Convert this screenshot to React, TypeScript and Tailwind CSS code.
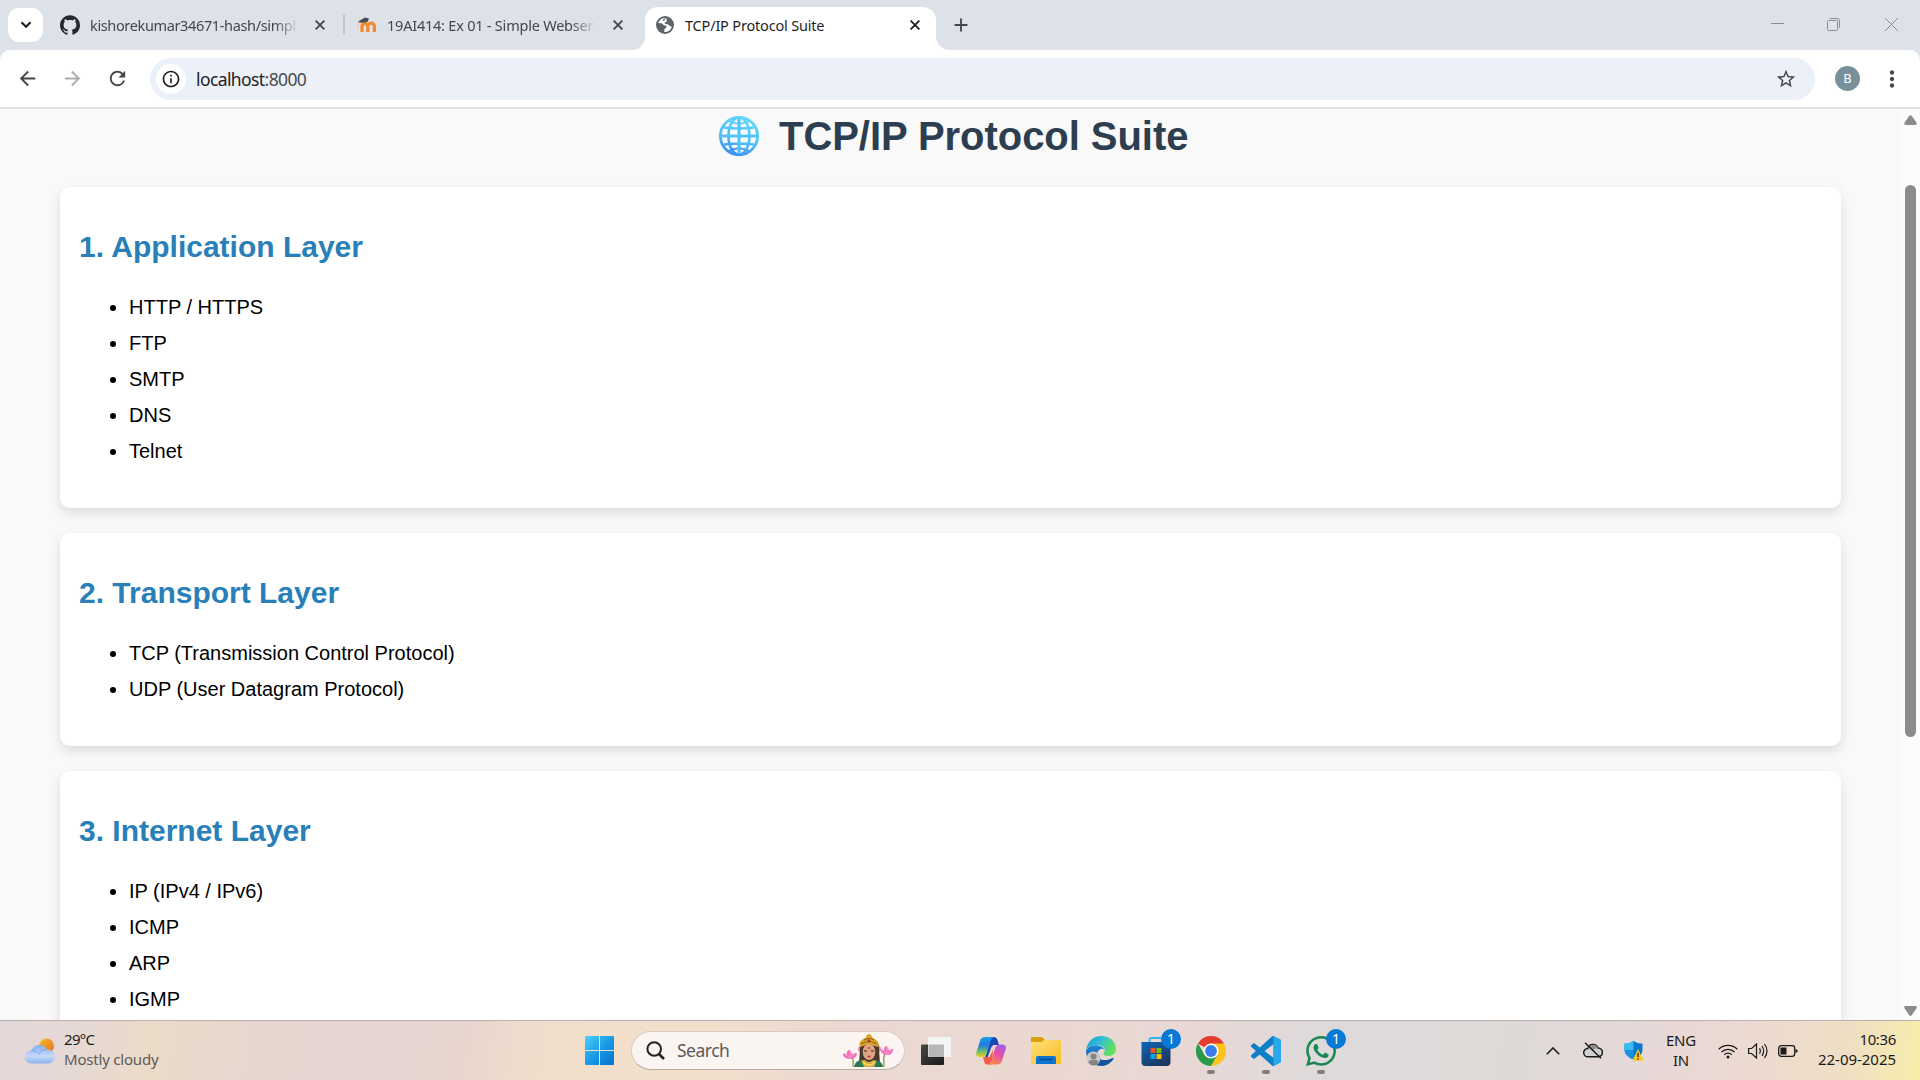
import React from "react";
import { SiGithub, SiWhatsapp } from "react-icons/si";
import { MdArrowBack, MdArrowForward, MdRefresh, MdStarBorder, MdMoreVert, MdInfoOutline, MdAdd } from "react-icons/md";

const ui = "font-['Noto_Sans','Open_Sans',sans-serif]";

function Cross({ className = "" }: { className?: string }) {
  return (
    <svg viewBox="0 0 10 10" className={`size-[10px] shrink-0 ${className}`} stroke="currentColor" strokeWidth="1.9" fill="none">
      <path d="M.6.6l8.8 8.8M9.4.6L.6 9.4" />
    </svg>
  );
}

function MoodleIcon() {
  return (
    <svg viewBox="0 0 20 16" className="h-[16px] w-[20px] shrink-0">
      <path d="M5 15V9.500a2.900 2.900 0 0 1 5.800 0V15M10.800 15V9.500a3.200 3.200 0 0 1 6.600 0V15" fill="none" stroke="#f5892d" strokeWidth="3.300" />
      <path d="M1 4.500L8 .5l4 1-1.500 3.500-5 .8-3-.3z" fill="#4b4b50" />
      <path d="M1.500 4.500L1 11" stroke="#e8b48c" strokeWidth=".8" />
    </svg>
  );
}

function SiteGlobe() {
  return (
    <svg viewBox="0 0 18 18" className="size-[18px] shrink-0">
      <circle cx="9" cy="9" r="9" fill="#5f6368" />
      <path d="M9.500 1.900C6 1.700 3.200 4 2.300 7l3.200.3c1.200.1 1.300 1.600 2.500 1.900 1.500.3 2.600.3 2.500 1.800-.1 1.300-1.700 1-2 2.200l-.3 2.700c3.600.6 6.900-1.900 7.700-5.400-1.300.2-2.300-.3-2.800-1.200-.6-1.200-2.600-.9-3.800-1.300-1-.5-.6-1.900.5-2 1.300-.1.700-1.400 1.300-2z" fill="#fff" />
      <path d="M9 2.300c-1.400.5-2.500 1.700-1.900 2.400.7.700 1.800-.4 2.400-2.400zM2 8.500l2.300 1.300c.8.500.6 1.400 1.300 2.200.8.900.6 2.200.4 3.200A7 7 0 0 1 2 8.500z" fill="#5f6368" />
    </svg>
  );
}

function TabStrip() {
  return (
    <div className="flex h-[50px] w-full bg-[#dde1e8] text-[#45474a]">
      <div className="mt-2 ml-2 flex h-[34px] w-[35px] items-center justify-center rounded-[11px] bg-white text-[#1f1f1f]">
        <svg viewBox="0 0 12 8" className="h-[8px] w-[12px]" fill="none" stroke="currentColor" strokeWidth="2.200">
          <path d="M1.500 1.200L6 5.700l4.500-4.500" />
        </svg>
      </div>
      <div className="ml-[17px] flex h-[50px] w-[283px] items-center">
        <SiGithub className="size-5 shrink-0 text-[#24292f]" />
        <span className="mt-px ml-[10px] w-[209px] text-[14.500px] tracking-[-0.360px] whitespace-nowrap [mask-image:linear-gradient(to_right,black_88%,transparent_100%)]">
          kishorekumar34671-hash/simpl
        </span>
        <Cross className="ml-4" />
      </div>
      <div className="mt-[14px] h-[21px] w-[2px] rounded bg-[#c5c6ca]" />
      <div className="ml-[12px] flex h-[50px] w-[275px] items-center">
        <MoodleIcon />
        <span className="mt-px ml-[10px] w-[209px] text-[14.500px] tracking-[-0.220px] whitespace-nowrap [mask-image:linear-gradient(to_right,black_88%,transparent_100%)]">
          19AI414: Ex 01 - Simple Webser
        </span>
        <Cross className="ml-[17px]" />
      </div>
      <div className="h-[50px] w-[13px] bg-white">
        <div className="h-full w-full rounded-br-[14px] bg-[#dde1e8]" />
      </div>
      <div className="mt-[7px] flex h-[43px] w-[291px] items-center rounded-t-[13px] bg-white pb-[7px] text-[#1f1f1f]">
        <div className="ml-[11px] flex w-full items-center">
          <SiteGlobe />
          <span className="mt-px ml-[11px] w-[225px] text-[14.500px] tracking-[-0.180px] whitespace-nowrap">TCP/IP Protocol Suite</span>
          <Cross />
        </div>
      </div>
      <div className="h-[50px] w-[14px] bg-white">
        <div className="h-full w-full rounded-bl-[14px] bg-[#dde1e8]" />
      </div>
      <MdAdd className="mt-[14px] size-[22px]" />
      <div className="mr-[22px] ml-auto flex h-[48px] items-center text-[#8b8d92]">
        <div className="mb-[1px] h-px w-[13px] bg-current" />
        <svg viewBox="0 0 13 13" className="ml-[43px] size-[13px]" fill="none" stroke="currentColor">
          <rect x=".5" y="2.500" width="10" height="10" rx="1" />
          <path d="M3 .5h7.500a2 2 0 0 1 2 2V10" />
        </svg>
        <svg viewBox="0 0 13 13" className="ml-[45px] size-[13px]" fill="none" stroke="currentColor">
          <path d="M0 0l13 13M13 0L0 13" />
        </svg>
      </div>
    </div>
  );
}

function Toolbar() {
  return (
    <div className="h-[59px] w-full bg-[#dde1e8]">
      <div className="flex h-full items-start rounded-t-[10px] border-b-2 border-[#e1e1e1] bg-white pt-2 text-[#45474a]">
        <div className="ml-4 flex h-[42px] w-[134px] items-center gap-[22px] pb-px">
          <MdArrowBack className="size-[23px]" />
          <MdArrowForward className="size-[23px] text-[#adadad]" />
          <MdRefresh className="size-[23px]" />
        </div>
        <div className="flex h-[42px] w-[1665px] items-center rounded-full bg-[#ecf0f9] pl-[6px] text-[#1f1f1f]">
          <div className="flex size-[30px] items-center justify-center rounded-full bg-white">
            <MdInfoOutline className="size-[20px]" />
          </div>
          <span className="mt-[2px] ml-[10px] text-[17.500px] leading-none tracking-[-0.600px]">
            localhost<span className="text-[#4a4c50]">:8000</span>
          </span>
          <MdStarBorder className="mr-[18px] ml-auto size-[22px] text-[#45474a]" />
        </div>
        <div className="mt-2 ml-[20px] flex size-[25px] items-center justify-center rounded-full bg-[#78909c] font-[Roboto,sans-serif] text-[13px] text-white">B</div>
        <MdMoreVert className="mt-[8px] ml-[19px] size-[26px]" />
      </div>
    </div>
  );
}

function GlobeEmoji() {
  return (
    <svg viewBox="0 0 40 40" className="size-[40px]">
      <defs>
        <linearGradient id="globe" x1=".6" y1="0" x2=".3" y2="1" gradientUnits="objectBoundingBox">
          <stop offset="0" stopColor="#5fd6fb" />
          <stop offset=".6" stopColor="#4cbcfa" />
          <stop offset="1" stopColor="#3f8df0" />
        </linearGradient>
      </defs>
      <circle cx="20" cy="20" r="18.500" fill="#f6fbff" />
      <g fill="none" stroke="url(#globe)" strokeWidth="2.600">
        <circle cx="20" cy="20" r="18.600" strokeWidth="2.800" />
        <ellipse cx="20" cy="20" rx="10.500" ry="18.500" />
        <path d="M5 11.500q15 2 30 0M5 28.500q15-2 30 0M2 19.990L38 20.010M19.990 2L20.010 38" />
        <path d="M10 5q10 5.500 20 0M10 35q10-5.500 20 0" strokeWidth="1.800" />
      </g>
      <path d="M2 20h36M20 2v36" stroke="#4fc4fb" strokeWidth="2.600" />
    </svg>
  );
}

const layers = [
  { title: "1. Application Layer", items: ["HTTP / HTTPS", "FTP", "SMTP", "DNS", "Telnet"] },
  { title: "2. Transport Layer", items: ["TCP (Transmission Control Protocol)", "UDP (User Datagram Protocol)"] },
  { title: "3. Internet Layer", items: ["IP (IPv4 / IPv6)", "ICMP", "ARP", "IGMP"] },
];

function Page() {
  return (
    <div className="flex h-[911px] w-full overflow-hidden bg-[#f9f9f9] font-['Liberation_Sans',Arial,sans-serif] text-black">
      <main className="h-full w-[1901px] pr-[60px] pl-[60px]">
        <h1 className="mt-[4px] flex h-[46px] items-center pl-[659px] text-[40px] leading-[46px] font-bold whitespace-nowrap text-[#2c3e50]">
          <GlobeEmoji />
          <span className="ml-[20px] tracking-[-0.050px]">TCP/IP Protocol Suite</span>
        </h1>
        <div className="mt-[28px] flex flex-col gap-[25px]">
          {layers.map((l) => (
            <section key={l.title} className="rounded-[10px] bg-white px-5 py-[20px] shadow-[0_5px_12px_rgba(0,0,0,0.12)]">
              <h2 className="mt-[24px] mb-[27px] -ml-px text-[30px] leading-[31px] font-bold text-[#2980b9]">{l.title}</h2>
              <ul className="mb-[19px] list-disc pl-[49px] text-[20px] leading-[36px]">
                {l.items.map((i) => (
                  <li key={i}>{i}</li>
                ))}
              </ul>
            </section>
          ))}
        </div>
      </main>
      <div className="flex h-full w-[19px] flex-col items-center bg-[#fcfcfc]">
        <svg viewBox="0 0 13 10" className="mt-[6px] h-[10px] w-[13px] shrink-0" fill="#8b8b8b">
          <path d="M5.300.8q1.200-1.300 2.400 0l4.800 7q.8 2-1 2.200h-10q-1.800-.2-1-2.200z" />
        </svg>
        <div className="mt-[60px] h-[552px] w-[11px] shrink-0 rounded-full bg-[#8b8b8b]" />
        <svg viewBox="0 0 13 10" className="mt-auto mb-[4px] h-[10px] w-[13px] shrink-0 rotate-180" fill="#8b8b8b">
          <path d="M5.300.8q1.200-1.300 2.400 0l4.800 7q.8 2-1 2.200h-10q-1.800-.2-1-2.200z" />
        </svg>
      </div>
    </div>
  );
}

function WeatherIcon() {
  return (
    <svg viewBox="0 0 30 26" className="h-[26px] w-[30px] shrink-0">
      <defs>
        <linearGradient id="sun" x1="0" y1="0" x2="1" y2="1">
          <stop offset="0" stopColor="#f2bf2e" />
          <stop offset="1" stopColor="#ee6c1b" />
        </linearGradient>
        <linearGradient id="cloud" x1="0" y1="0" x2="0" y2="1">
          <stop offset="0" stopColor="#89aef0" />
          <stop offset=".6" stopColor="#c6daf9" />
          <stop offset="1" stopColor="#8fb2f0" />
        </linearGradient>
      </defs>
      <circle cx="21.500" cy="8" r="7.500" fill="url(#sun)" />
      <path d="M6.500 25.500a6.500 6.500 0 0 1-.5-13A9 9 0 0 1 22 11.500a7 7 0 1 1 1.500 14z" fill="url(#cloud)" />
      <path d="M14 16.500a7.500 7.500 0 0 1 8-4.800M6 12.500a7 7 0 0 1 6.500 2.300" fill="none" stroke="#7fa5ea" strokeWidth="1" />
    </svg>
  );
}

function WindowsIcon() {
  return (
    <svg viewBox="0 0 29 29" className="size-[29px]">
      <defs>
        <linearGradient id="win" x1="0" y1="0" x2="29" y2="29" gradientUnits="userSpaceOnUse">
          <stop offset="0" stopColor="#4fd0fb" />
          <stop offset=".5" stopColor="#1a9ae6" />
          <stop offset="1" stopColor="#0670cf" />
        </linearGradient>
      </defs>
      <path fill="url(#win)" d="M1 0h13v14H0V1a1 1 0 0 1 1-1zM15 0h13a1 1 0 0 1 1 1v13H15zM0 15h14v14H1a1 1 0 0 1-1-1zM15 15h14v13a1 1 0 0 1-1 1H15z" />
    </svg>
  );
}

function FestivalArt() {
  const petals = "M0 6Q-7 5-7-1Q-4-1-3 1Q-4-3-1-5Q2-3 2 1Q4-2 7-1Q6 6 0 6";
  return (
    <svg viewBox="0 0 52 34" className="h-[34px] w-[52px]">
      <path d="M10 21q2 6 1 12M43 17q-2 8-1 16" stroke="#73963f" strokeWidth="1.200" fill="none" />
      <g fill="#f26bbb">
        <path d={petals} transform="translate(8 20) scale(1 .85)" />
        <path d={petals} transform="translate(45 16) scale(.9 .85)" />
        <circle cx="19" cy="15" r="3" fill="#f07eb5" />
        <circle cx="36" cy="15" r="3" fill="#f07eb5" />
      </g>
      <path d="M3 20l5 4 5-4M8 17v7M40 16l5 4 5-4M45 13v7" stroke="#fbb4de" strokeWidth=".8" fill="none" />
      <path d="M18 15q0-10 9-11 10 1 10 11l1 15H17z" fill="#49372d" />
      <path d="M18 13q-2-5 3-8 3-1 4-4 2-2 4 0 1 3 4 4 5 3 3 8-9-4-18 0z" fill="#d9a62c" />
      <path d="M19 10q8-5 16 0M22 6q5-3 10 0" stroke="#8b5b18" strokeWidth="1.100" fill="none" />
      <circle cx="27" cy="7" r="1.400" fill="#b52c35" />
      <ellipse cx="27" cy="18" rx="6.300" ry="8" fill="#dfa582" />
      <path d="M22 17h3M29 17h3" stroke="#392520" strokeWidth="1.200" />
      <path d="M27 13v2M25.500 22.500h3" stroke="#b8313d" strokeWidth="1.300" />
      <path d="M12 33q2-7 11-7 4 4 8 0 9 1 11 7z" fill="#d9ac35" />
      <path d="M12 33q1-6 7-7l3 7zM32 33l3-7q5 2 6 7z" fill="#287655" />
      <path d="M21 28q6 6 12 0" stroke="#f5e07e" strokeWidth="1.500" fill="none" />
    </svg>
  );
}

function TaskViewIcon() {
  return (
    <svg viewBox="0 0 30 30" className="size-[30px]">
      <defs>
        <linearGradient id="tv" x1="0" y1="0" x2="1" y2="1">
          <stop offset="0" stopColor="#474742" />
          <stop offset="1" stopColor="#1a1a1a" />
        </linearGradient>
      </defs>
      <rect y="8.500" width="23" height="20.500" rx="1" fill="url(#tv)" />
      <rect x="7" y="1" width="23" height="20" rx="1" fill="#f4f4f5" />
      <path d="M7.500 8.500H23V21H8.500q-1 0-1-1z" fill="#b7b7b7" />
    </svg>
  );
}

function CopilotIcon() {
  return (
    <svg viewBox="0 0 30 28" className="h-[28px] w-[30px]">
      <defs>
        <linearGradient id="cpa" x1="0" y1="0" x2="0" y2="1">
          <stop offset="0" stopColor="#15a4ee" />
          <stop offset=".4" stopColor="#2278e6" />
          <stop offset=".7" stopColor="#5fbb74" />
          <stop offset="1" stopColor="#f4d01e" />
        </linearGradient>
        <linearGradient id="cpb" x1=".8" y1="0" x2=".3" y2="1">
          <stop offset="0" stopColor="#a05cf0" />
          <stop offset=".5" stopColor="#e552a4" />
          <stop offset="1" stopColor="#fb8a4d" />
        </linearGradient>
      </defs>
      <path d="M14 0h4q2.500 0 3.300 2.500L23 8h-4q-3 0-4 3l-3 9q-1 1-3 1z" fill="#1b46b8" />
      <path d="M9 0h9q-2.500.7-3.300 3.400L11 16q-1.200 4-5 4H4q-5 0-3.600-5L4 4q1.200-4 5-4z" fill="url(#cpa)" />
      <path d="M16 27.500h-4.500q-2.500 0-3.300-2.500L7 20h4q2.500 0 3.500-3l3-10z" fill="#f45a50" />
      <path d="M21 27.500h-9q2.500-.7 3.300-3.400L19 11.500q1.200-4 5-4h2q5 0 3.600 5L26 23.500q-1.200 4-5 4z" fill="url(#cpb)" />
      <path d="M17.500 8h1.800L13.500 20h-1.800z" fill="#ecdad3" />
    </svg>
  );
}

function ExplorerIcon() {
  return (
    <svg viewBox="0 0 30 27" className="h-[27px] w-[30px]">
      <defs>
        <linearGradient id="fold" x1="0" y1="0" x2="1" y2="1">
          <stop offset="0" stopColor="#ffe07a" />
          <stop offset="1" stopColor="#f9bd21" />
        </linearGradient>
      </defs>
      <path d="M0 1q0-1 1-1h9q1 0 2 1l2 2v5H0z" fill="#dba10b" />
      <path d="M0 5h10q1 0 2-1l1-1h16q1 0 1 1v22q0 1-1 1H1q-1 0-1-1z" fill="url(#fold)" />
      <path d="M5 27v-6q0-2 2-2h16q2 0 2 2v6z" fill="#0d74cf" />
      <path d="M9 22.500h12" stroke="#094b91" strokeWidth="1.300" strokeLinecap="round" />
    </svg>
  );
}

function EdgeIcon() {
  return (
    <svg viewBox="0 0 30 30" className="size-[30px]">
      <defs>
        <linearGradient id="edgeA" x1="0" y1="0" x2="1" y2=".4">
          <stop offset="0" stopColor="#189bdc" />
          <stop offset=".5" stopColor="#2fc0d8" />
          <stop offset="1" stopColor="#65e05c" />
        </linearGradient>
        <linearGradient id="edgeB" x1="0" y1="0" x2="0" y2="1">
          <stop offset="0" stopColor="#1c8ad9" />
          <stop offset="1" stopColor="#124a9c" />
        </linearGradient>
      </defs>
      <path d="M0 14.500C1 6 7 0 15.500 0 24 0 30 6 30 12.500c0 5-3.500 7.500-7.500 7.500-3 0-5-1-5-2.300 0-1 1.300-1.400 1.300-3.400C18.800 11.500 15.500 9 11 9 5 9 1 12 0 14.500z" fill="url(#edgeA)" />
      <path d="M0 14.500C2 11 6 9 10.500 9.200c4 .2 7 2.300 7.800 4.300-3.300-2-7 .5-7 5C11.300 25 17 28 22 27c-3 2.200-6 3-8.500 2.800C5 29 0 22.500 0 14.500z" fill="url(#edgeB)" />
      <path d="M12 17c-1.500 7 6 8 11 6.500 2-.7 3.500-2 4.500-1.500 1 .8-4 7.500-11.500 8C8 29 7.500 19 12 17z" fill="#14539f" />
      <circle cx="7.500" cy="22.500" r="7" fill="#c9c9c9" />
      <circle cx="7.500" cy="20.500" r="3.100" fill="#858585" />
      <path d="M2.500 27q0-3 3-3h4q3 0 3 3-5 5-10 0z" fill="#858585" />
    </svg>
  );
}

function StoreIcon() {
  return (
    <svg viewBox="0 0 30 30" className="size-[30px]">
      <defs>
        <linearGradient id="store" x1="0" y1="0" x2=".7" y2="1">
          <stop offset="0" stopColor="#0e67b8" />
          <stop offset="1" stopColor="#1d355f" />
        </linearGradient>
      </defs>
      <path d="M8.500 7V4q0-2 2-2H20" fill="none" stroke="#35b5ee" strokeWidth="2" />
      <path d="M.5 6h29v20q0 4-4 4h-21q-4 0-4-4z" fill="url(#store)" />
      <path d="M9.500 12h5v5h-5z" fill="#f25022" />
      <path d="M15.500 12h5v5h-5z" fill="#7fba00" />
      <path d="M9.500 18h5v5h-5z" fill="#00a4ef" />
      <path d="M15.500 18h5v5h-5z" fill="#ffb900" />
    </svg>
  );
}

function ChromeIcon() {
  return (
    <svg viewBox="0 0 48 48" className="size-[30px]">
      <path d="M24 24L3.200 12A24 24 0 0 1 44.800 12z" fill="#e33b2e" />
      <path d="M24 12h20.800A24 24 0 0 1 24 48l10.400-18z" fill="#fcc31e" />
      <path d="M13.600 30L3.200 12A24 24 0 0 0 24 48l10.400-18z" fill="#2a9a48" />
      <circle cx="24" cy="24" r="12" fill="#fff" />
      <circle cx="24" cy="24" r="9.500" fill="#3b7ded" />
    </svg>
  );
}

function CodeIcon() {
  return (
    <svg viewBox="0 0 24 24" className="size-[30px]">
      <path
        fill="#0f7fc7"
        d="M23.150 2.587L18.210.21a1.494 1.494 0 0 0-1.705.29l-9.460 8.630-4.120-3.128a.999.999 0 0 0-1.276.057L.327 7.261A1 1 0 0 0 .326 8.740L3.899 12 .326 15.260a1 1 0 0 0 .001 1.479L1.650 17.940a.999.999 0 0 0 1.276.057l4.120-3.128 9.460 8.630a1.492 1.492 0 0 0 1.704.290l4.942-2.377A1.500 1.500 0 0 0 24 20.060V3.939a1.500 1.500 0 0 0-.850-1.352zm-5.146 14.861L10.826 12l7.178-5.448v10.896z"
      />
      <path fill="#2ba7ee" d="M18 .15l5.150 2.437q.85.450.85 1.352V20.060q0 .9-.85 1.350L18 23.850z" />
    </svg>
  );
}

function TaskApp({ children, badge, running }: { children: React.ReactNode; badge?: boolean; running?: boolean }) {
  return (
    <div className="relative flex h-[59px] w-[55px] items-center justify-center">
      {children}
      {badge && (
        <span className="absolute top-[8px] right-[2px] flex size-5 items-center justify-center rounded-full bg-[#0778d4] text-[14px] leading-none text-white">1</span>
      )}
      {running && <span className="absolute bottom-[6px] h-[4px] w-2 rounded-full bg-[#857c7a]" />}
    </div>
  );
}

function Tray() {
  return (
    <div className="mr-[24px] ml-auto flex h-full items-center text-[15px] leading-[20px] text-[#1b1b1b]">
      <svg viewBox="0 0 14 8" className="h-[8px] w-[14px]" fill="none" stroke="currentColor" strokeWidth="1.600">
        <path d="M.8 7.200L7 1l6.200 6.200" />
      </svg>
      <svg viewBox="0 0 20 17" className="ml-[23px] h-[17px] w-[20px]" stroke="currentColor" strokeWidth="1.500">
        <path d="M5 14.800a4.200 4.200 0 0 1-.2-8.400A5.400 5.400 0 0 1 15 5.900a4.400 4.400 0 0 1 0 8.900z" fill="#d3d0d1" />
        <path d="M5 6.400a5.400 5.400 0 0 1 10-.5q-4 0-5 3Q8 6 5 6.400z" fill="#8f8d8d" stroke="none" />
        <path d="M2 .8l16 15.500" />
      </svg>
      <svg viewBox="0 0 20 20" className="ml-[21px] size-[20px]">
        <path d="M9.500 0Q13 2.500 18.500 2.700V9q0 6-9 9.500Q.5 15 .5 9V2.700Q6 2.500 9.500 0z" fill="#0a77d0" />
        <path d="M9.500 0v9.200H.5V2.700Q6 2.500 9.500 0z" fill="#36bdf0" />
        <path d="M9.500 9.200H.6Q1 15 9.500 18.500z" fill="#1593e0" />
        <path d="M14 8l5.600 11.800H8.300z" fill="#fcc51c" />
        <path d="M14 12v4M14 17.200v1.300" stroke="#222" strokeWidth="1.300" />
      </svg>
      <div className="mb-[2px] ml-[17px] w-[40px] text-center tracking-[-0.200px]">
        <div>ENG</div>
        <div>IN</div>
      </div>
      <svg viewBox="0 0 20 16" className="ml-[17px] h-[16px] w-[20px]" fill="none" stroke="currentColor" strokeWidth="1.300">
        <path d="M.7 6.200a13 13 0 0 1 18.600 0M3.500 9a9.200 9.200 0 0 1 13 0M6.300 11.700a5.200 5.200 0 0 1 7.400 0" />
        <circle cx="10" cy="14" r="1.500" fill="currentColor" stroke="none" />
      </svg>
      <svg viewBox="0 0 20 16" className="ml-[10px] h-[16px] w-[20px]" fill="none" stroke="currentColor" strokeWidth="1.200">
        <path d="M.6 5.500h3L8.500 1v14L3.600 10.500h-3zM11.500 5.300q1.700 2.700 0 5.400M14 3q3.200 5 0 10M16.500 1q5 7 0 14" />
      </svg>
      <svg viewBox="0 0 20 12" className="ml-[10px] h-[12px] w-[20px]" fill="none" stroke="currentColor" strokeWidth="1.300">
        <rect x=".7" y=".7" width="16" height="10.600" rx="2.500" />
        <path d="M2.500 2.500h6v7h-6zM17.500 4v4l2-1V5z" fill="currentColor" stroke="none" />
      </svg>
      <div className="mb-[3px] ml-[20px] w-[78px] text-right whitespace-nowrap">
        <div className="tracking-[-0.350px]">10:36</div>
        <div className="tracking-[-0.030px]">22-09-2025</div>
      </div>
    </div>
  );
}

function Taskbar() {
  return (
    <div className="flex h-[60px] w-full border-t border-[#b9b0ae] bg-[linear-gradient(100deg,#e4d7d9_0%,#e6d8d5_4%,#ebdbc8_8%,#e8d7cf_13%,#e5d6d4_19%,#e8d6cf_24%,#f1dfcc_29%,#f2dfcc_37%,#ecd9d0_43%,#ead8d3_48%,#ebd8d0_54%,#e8d8d5_62%,#dedadb_69%,#dddad8_78%,#e6d8d9_85%,#ecdad1_91%,#efdfc4_96%,#f7eeaa_100%)]">
      <div className="flex w-[577px] items-center pl-[25px] text-[15px] leading-[20px]">
        <WeatherIcon />
        <div className="ml-[9px] pb-[3px] tracking-[-0.200px]">
          <div className="tracking-[-0.700px] text-[#1b1b1b]">29°C</div>
          <div className="text-[#5f5a58]">Mostly cloudy</div>
        </div>
      </div>
      <div className="flex w-[54px] items-center pl-[8px]">
        <WindowsIcon />
      </div>
      <div className="mt-[10px] flex h-[39px] w-[274px] items-center rounded-full border border-[#d8cbc4] border-b-[#b9aca7] bg-[#faf5f1] pr-[10px] pl-[14px]">
        <svg viewBox="0 0 19 19" className="size-[19px]" fill="none" stroke="#252525" strokeWidth="2">
          <circle cx="8.200" cy="8" r="6.800" />
          <path d="M13 13l5 5" strokeWidth="2.600" />
        </svg>
        <span className="ml-[12px] text-[17.500px] tracking-[-0.500px] text-[#5d5a58]">Search</span>
        <div className="ml-auto">
          <FestivalArt />
        </div>
      </div>
      <div className="ml-[3px] flex">
        <TaskApp><TaskViewIcon /></TaskApp>
        <TaskApp><CopilotIcon /></TaskApp>
        <TaskApp><ExplorerIcon /></TaskApp>
        <TaskApp><EdgeIcon /></TaskApp>
        <TaskApp badge><StoreIcon /></TaskApp>
        <TaskApp running><ChromeIcon /></TaskApp>
        <TaskApp running><CodeIcon /></TaskApp>
        <TaskApp badge running><SiWhatsapp className="size-[30px] text-[#198754]" /></TaskApp>
      </div>
      <Tray />
    </div>
  );
}

export default function App() {
  return (
    <div className={`flex h-[1080px] w-[1920px] flex-col overflow-hidden ${ui}`}>
      <TabStrip />
      <Toolbar />
      <Page />
      <Taskbar />
    </div>
  );
}
